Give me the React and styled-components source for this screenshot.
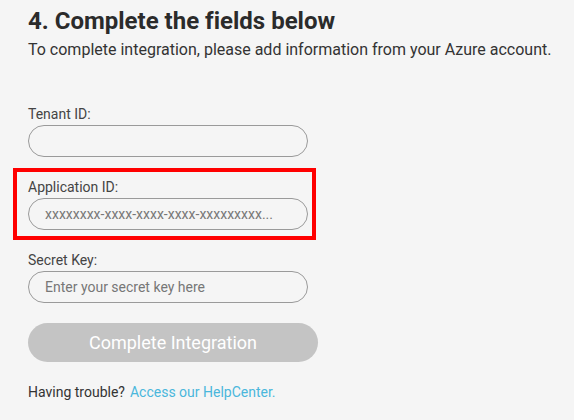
import React from "react";
import styled, { createGlobalStyle } from "styled-components";

const Global = createGlobalStyle`
  html, body { margin: 0; padding: 0; background: #f5f5f5; }
  body { font-family: Roboto, "Liberation Sans", Arial, sans-serif; color: #333; font-variant-ligatures: none; }
  * { box-sizing: border-box; }
`;

const Page = styled.div`
  width: 574px;
  height: 420px;
  padding: 7px 0 0 28px;
  background: #f5f5f5;
`;

const Title = styled.h2`
  margin: 0;
  font-size: 24px;
  font-weight: 700;
  line-height: 28px;
  color: #2b2b2b;
  font-variant-ligatures: none;
`;

const Subtitle = styled.p`
  margin: 5px 0 0;
  font-size: 16px;
  line-height: 20px;
  color: #333;
`;

const Form = styled.form`
  display: flex;
  flex-direction: column;
  margin-top: 46px;
  width: 290px;
`;

const Field = styled.div`
  display: flex;
  flex-direction: column;
  gap: 3px;
  margin: ${(p) => (p.$highlight ? "11px 0 12px -15px" : "0")};
  padding: ${(p) => (p.$highlight ? "7px 8px 6px 11px" : "0")};
  border: ${(p) => (p.$highlight ? "4px solid #ff0000" : "none")};
  width: ${(p) => (p.$highlight ? "303px" : "auto")};
`;

const Label = styled.label`
  font-size: 14px;
  line-height: 16px;
  color: #444;
`;

const Input = styled.input`
  width: 280px;
  height: 32px;
  border: 1px solid #9a9a9a;
  border-radius: 16px;
  background: #f5f5f5;
  padding: 0 16px;
  font-family: Roboto, "Liberation Sans", Arial, sans-serif;
  font-size: 14px;
  color: #333;
  outline: none;
  &::placeholder { color: #777; }
`;

const Button = styled.button`
  margin-top: 20px;
  width: 290px;
  height: 39px;
  border: none;
  border-radius: 20px;
  background: #c4c4c4;
  color: #fff;
  font-family: Roboto, "Liberation Sans", Arial, sans-serif;
  font-size: 18px;
`;

const Help = styled.p`
  margin: 22px 0 0;
  font-size: 14px;
  line-height: 16px;
  color: #333;
`;

const Link = styled.a`
  color: #4ab7dc;
  text-decoration: none;
  margin-left: 5px;
`;

export default function App() {
  return (
    <>
      <Global />
      <Page>
        <Title>4. Complete the fields below</Title>
        <Subtitle>To complete integration, please add information from your Azure account.</Subtitle>
        <Form onSubmit={(e) => e.preventDefault()}>
          <Field>
            <Label>Tenant ID:</Label>
            <Input />
          </Field>
          <Field $highlight>
            <Label>Application ID:</Label>
            <Input placeholder="xxxxxxxx-xxxx-xxxx-xxxx-xxxxxxxxx..." />
          </Field>
          <Field>
            <Label>Secret Key:</Label>
            <Input placeholder="Enter your secret key here" />
          </Field>
          <Button type="button">Complete Integration</Button>
        </Form>
        <Help>
          Having trouble?<Link href="#">Access our HelpCenter.</Link>
        </Help>
      </Page>
    </>
  );
}
